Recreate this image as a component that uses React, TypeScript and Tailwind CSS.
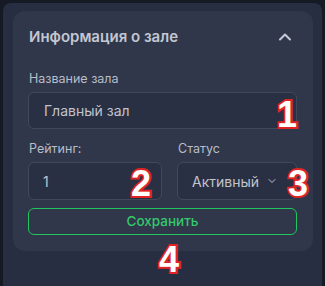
import { ChevronDown, ChevronUp } from 'lucide-react';

const badge =
  'pointer-events-none absolute font-["Liberation_Sans",Arial,sans-serif] text-[36px] font-bold leading-none text-white [-webkit-text-stroke:4px_#e02424] [paint-order:stroke_fill]';

export default function App() {
  return (
    <div className="relative h-[286px] w-[325px] overflow-hidden bg-[#161a25] pl-[3px] pr-[3px] pt-[3px] font-['Inter',sans-serif]">
      <div className="h-full rounded-tl-lg rounded-tr-lg bg-[#282e41] pl-[10px] pr-[9px] pt-[8px]">
        <section className="rounded-xl bg-[#30374a] pb-[16px] pl-[15px] pr-[16px] pt-[14px]">
          <header className="flex h-6 items-center justify-between">
            <h2 className="pl-px text-[15px] font-semibold text-[#c3c7d3]">Информация о зале</h2>
            <ChevronUp className="mr-[2px] h-5 w-5 text-[#c3c7d3]" strokeWidth={2.5} />
          </header>

          <label className="mt-[21px] mb-1 block pl-px text-[12.5px] leading-[18px] text-[#b9bdc9]">Название зала</label>
          <div className="flex h-[37px] items-center rounded-md border border-[#414859] bg-[#2a3043] pl-[15px] text-[14px] text-[#bfc3ce]">
            Главный зал
          </div>

          <div className="mt-[11px] flex gap-[15px]">
            <div className="w-[134px]">
              <label className="mb-1 block pl-px text-[12.5px] leading-[18px] text-[#b9bdc9]">Рейтинг:</label>
              <div className="flex h-[38px] items-center rounded-md border border-[#414859] bg-[#2a3043] pl-[14px] text-[14px] text-[#bfc3ce]">
                1
              </div>
            </div>
            <div className="flex-1">
              <label className="mb-1 block pl-px text-[12.5px] leading-[18px] text-[#b9bdc9]">Статус</label>
              <div className="flex h-[38px] items-center gap-[7px] rounded-md border border-[#414859] bg-[#2a3043] pl-[14px] text-[14px] text-[#bfc3ce]">
                Активный
                <ChevronDown className="h-3 w-3" strokeWidth={2} />
              </div>
            </div>
          </div>

          <button
            type="button"
            className="mt-2 flex h-[27px] w-full items-center justify-center rounded-md border-[1.5px] border-[#22c55e] text-[13.5px] font-medium text-[#34c96c]"
          >
            Сохранить
          </button>
        </section>
      </div>

      <span className={`${badge} left-[277px] top-[97px]`}>1</span>
      <span className={`${badge} left-[131px] top-[166px]`}>2</span>
      <span className={`${badge} left-[288px] top-[166px]`}>3</span>
      <span className={`${badge} left-[159px] top-[242px]`}>4</span>
    </div>
  );
}
